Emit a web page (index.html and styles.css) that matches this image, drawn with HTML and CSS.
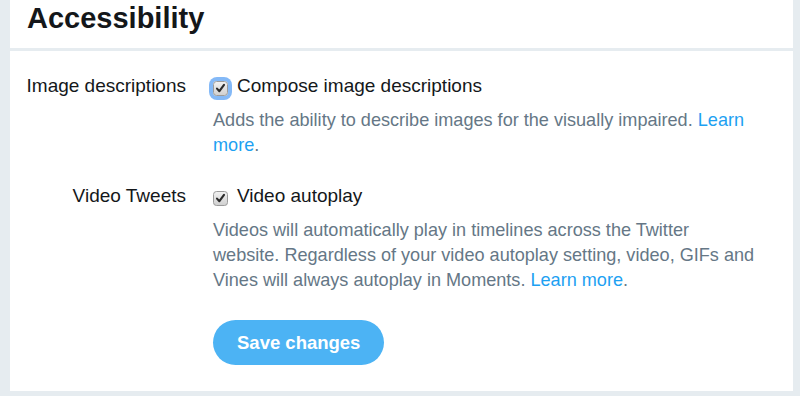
FILE: index.html
```html
<!DOCTYPE html>
<html>
<head>
	<meta charset="utf-8">
	<title>Accessibility</title>
	<link rel="stylesheet" href="styles.css">
</head>
<body>
	<div class="page">
		<div class="header">
			<h1>Accessibility</h1>
		</div>
		<div class="content">
			<!-- 图片描述 -->
			<div class="row">
				<div class="label">Image descriptions</div>
				<div class="control">
					<label class="check focus">
						<span class="box">
							<svg width="15" height="15" viewBox="0 0 15 15">
								<defs>
									<linearGradient id="g1" x1="0" y1="0" x2="0" y2="1">
										<stop offset="0" stop-color="#f2f2f2"/>
										<stop offset="1" stop-color="#cfcfcf"/>
									</linearGradient>
								</defs>
								<rect x="0.5" y="0.5" width="14" height="14" rx="3" fill="url(#g1)" stroke="#9b9b9b"/>
								<path d="M4 7.6 L6.4 10.2 L11 3.8" fill="none" stroke="#2b2b2b" stroke-width="2.1" stroke-linecap="round" stroke-linejoin="round"/>
							</svg>
						</span>
						Compose image descriptions
					</label>
					<p class="desc">Adds the ability to describe images for the visually impaired. <a href="javascript:;">Learn more</a>.</p>
				</div>
			</div>
			<!-- 视频 -->
			<div class="row">
				<div class="label">Video Tweets</div>
				<div class="control">
					<label class="check">
						<span class="box">
							<svg width="15" height="15" viewBox="0 0 15 15">
								<defs>
									<linearGradient id="g2" x1="0" y1="0" x2="0" y2="1">
										<stop offset="0" stop-color="#f2f2f2"/>
										<stop offset="1" stop-color="#cfcfcf"/>
									</linearGradient>
								</defs>
								<rect x="0.5" y="0.5" width="14" height="14" rx="3" fill="url(#g2)" stroke="#9b9b9b"/>
								<path d="M4 7.6 L6.4 10.2 L11 3.8" fill="none" stroke="#2b2b2b" stroke-width="2.1" stroke-linecap="round" stroke-linejoin="round"/>
							</svg>
						</span>
						Video autoplay
					</label>
					<p class="desc">Videos will automatically play in timelines across the Twitter website. Regardless of your video autoplay setting, video, GIFs and Vines will always autoplay in Moments. <a href="javascript:;">Learn more</a>.</p>
					<button class="btn">Save changes</button>
				</div>
			</div>
		</div>
	</div>
</body>
</html>
```
FILE: styles.css
```css
* {
	padding: 0px;
	margin: 0px;
	box-sizing: border-box;
}
body {
	background: #e6ecf0;
	font-family: "Liberation Sans", Arial, sans-serif;
	color: #14171a;
}
.page {
	width: 783px;
	margin-left: 10px;
}
.header {
	background: #fff;
	height: 48px;
	padding: 1px 0 0 17px;
}
.header h1 {
	font-size: 29px;
	line-height: 34px;
	font-weight: bold;
}
.content {
	background: #fff;
	margin-top: 3px;
	height: 340px;
	padding-top: 23px;
}
.row {
	display: grid;
	grid-template-columns: 176px 542px;
	column-gap: 27px;
	margin-bottom: 26px;
}
.label {
	text-align: right;
	font-size: 19px;
	line-height: 24px;
}
.check {
	display: flex;
	align-items: baseline;
	font-size: 19px;
	line-height: 24px;
}
.box {
	width: 15px;
	height: 15px;
	margin-right: 9px;
	border-radius: 4px;
	align-self: center;
	position: relative;
	top: 2px;
}
.box svg {
	display: block;
}
.focus .box {
	box-shadow: 0 0 0 4px #84b9f7;
}
.desc {
	margin-top: 10px;
	font-size: 18.1px;
	line-height: 25px;
	color: #657786;
}
.desc a {
	color: #1da1f2;
	text-decoration: none;
}
.btn {
	margin-top: 27px;
	height: 45px;
	padding: 0 24px;
	border: none;
	border-radius: 23px;
	background: #4cb3f4;
	color: #fff;
	font-family: "Liberation Sans", Arial, sans-serif;
	font-size: 18.5px;
	font-weight: bold;
}
```
